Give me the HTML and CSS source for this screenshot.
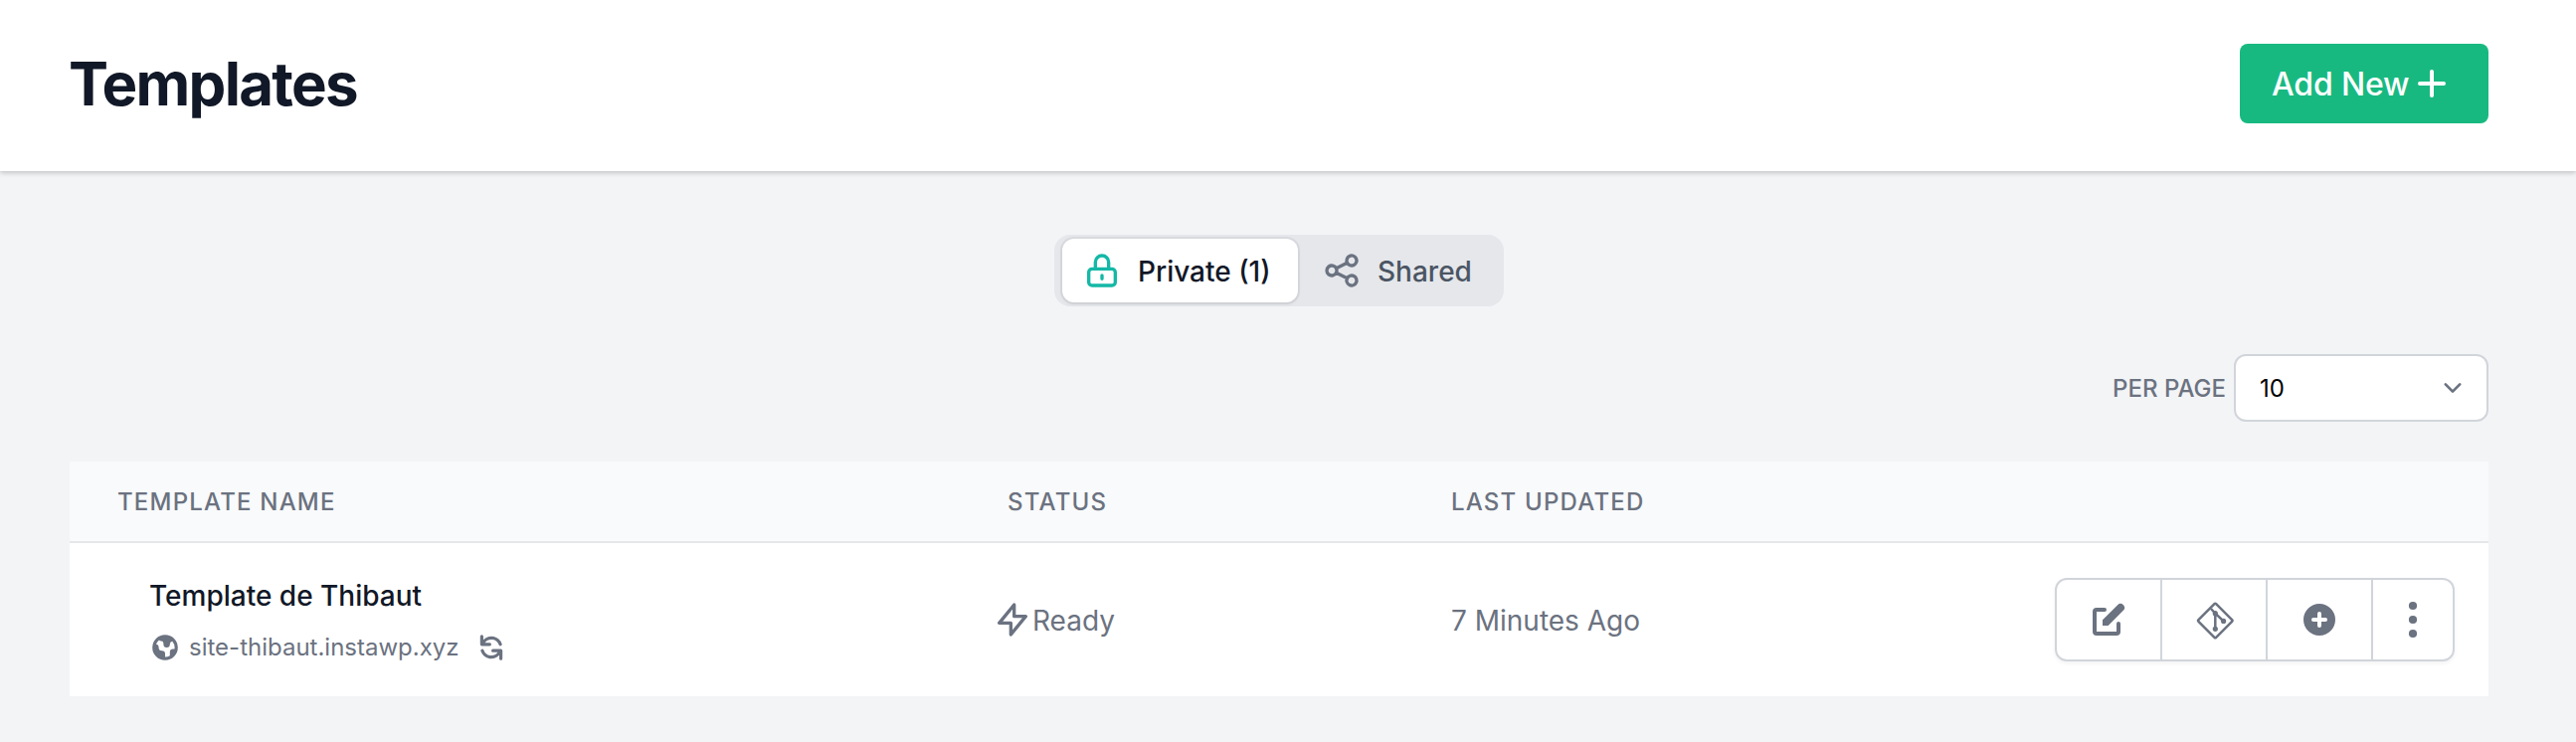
FILE: index.html
```html
<!DOCTYPE html>
<html lang="en">
<head>
<meta charset="utf-8">
<title>Templates</title>
<link rel="stylesheet" href="styles.css">
</head>
<body>
<header class="page-header">
  <h1 class="page-title">Templates</h1>
  <button class="add-button"><span class="label">Add New</span>
    <svg class="icon" viewBox="0 0 20 20" fill="currentColor"><path d="M10 3a1 1 0 011 1v5h5a1 1 0 110 2h-5v5a1 1 0 11-2 0v-5H4a1 1 0 110-2h5V4a1 1 0 011-1z"/></svg>
  </button>
</header>
<main class="content">
  <nav class="tabs">
    <a class="tab tab-active">
      <svg class="icon outline" viewBox="0 0 24 24"><path d="M12 15v2m-6 4h12a2 2 0 002-2v-6a2 2 0 00-2-2H6a2 2 0 00-2 2v6a2 2 0 002 2zm10-10V7a4 4 0 00-8 0v4h8z"/></svg>
      <span class="label">Private (1)</span>
    </a>
    <a class="tab tab-shared">
      <svg class="icon outline" viewBox="0 0 24 24"><path d="M8.684 13.342C8.886 12.938 9 12.482 9 12c0-.482-.114-.938-.316-1.342m0 2.684a3 3 0 110-2.684m0 2.684l6.632 3.316m-6.632-6l6.632-3.316m0 0a3 3 0 105.367-2.684 3 3 0 00-5.367 2.684zm0 9.316a3 3 0 105.368 2.684 3 3 0 00-5.368-2.684z"/></svg>
      <span class="label">Shared</span>
    </a>
  </nav>
  <div class="pager">
    <span class="pager-label label">PER PAGE</span>
    <div class="select">
      <span class="label">10</span>
      <svg class="chevron" viewBox="0 0 20 20"><path d="M6 8l4 4 4-4"/></svg>
    </div>
  </div>
  <section class="table">
    <div class="row head">
      <div class="head-name">TEMPLATE NAME</div>
      <div>STATUS</div>
      <div>LAST UPDATED</div>
    </div>
    <div class="row body-row">
      <div class="name-cell">
        <div class="name">Template de Thibaut</div>
        <div class="site">
          <svg class="icon-sm" viewBox="0 0 20 20" fill="currentColor"><path fill-rule="evenodd" d="M10 18a8 8 0 100-16 8 8 0 000 16zM4.332 8.027a6.012 6.012 0 011.912-2.706C6.512 5.73 6.974 6 7.5 6A1.5 1.5 0 019 7.5V8a2 2 0 004 0 2 2 0 011.523-1.943A5.977 5.977 0 0116 10c0 .34-.028.675-.083 1H15a2 2 0 00-2 2v2.197A5.973 5.973 0 0110 16v-2a2 2 0 00-2-2 2 2 0 01-2-2 2 2 0 00-1.668-1.973z"/></svg>
          <span class="site-url">site-thibaut.instawp.xyz</span>
          <svg class="icon-sm" viewBox="0 0 20 20" fill="currentColor"><path d="M4 2a1 1 0 011 1v2.101a7.002 7.002 0 0111.601 2.566 1 1 0 11-1.885.666A5.002 5.002 0 005.999 7H9a1 1 0 010 2H4a1 1 0 01-1-1V3a1 1 0 011-1zm.008 9.057a1 1 0 011.276.61A5.002 5.002 0 0014.001 13H11a1 1 0 110-2h5a1 1 0 011 1v5a1 1 0 11-2 0v-2.101a7.002 7.002 0 01-11.601-2.566 1 1 0 01.61-1.276z"/></svg>
        </div>
      </div>
      <div class="status">
        <svg class="icon outline" viewBox="0 0 24 24"><path d="M13 10V3L4 14h7v7l9-11h-7z"/></svg>
        <span class="label">Ready</span>
      </div>
      <div class="updated label">7 Minutes Ago</div>
      <div class="actions">
        <button class="action"><svg class="icon" viewBox="0 0 20 20" fill="currentColor"><path d="M17.414 2.586a2 2 0 00-2.828 0L7 10.172V13h2.828l7.586-7.586a2 2 0 000-2.828z"/><path d="M2 6a2 2 0 012-2h4a1 1 0 010 2H4v10h10v-4a1 1 0 112 0v4a2 2 0 01-2 2H4a2 2 0 01-2-2V6z"/></svg></button>
        <button class="action"><svg class="icon git" viewBox="0 0 40 40"><rect x="8.8" y="8.500" width="25" height="25" rx="1.200" transform="rotate(45 21.300 21)"/><path d="M17 9l4.300 4.700v15.500M21.300 13.700l8.300 7.800"/><circle cx="21.300" cy="13.700" r="2"/><circle cx="21.300" cy="29.300" r="2"/><circle cx="29.600" cy="21.400" r="2"/></svg></button>
        <button class="action"><svg class="icon" viewBox="0 0 20 20" fill="currentColor"><path fill-rule="evenodd" d="M10 18a8 8 0 100-16 8 8 0 000 16zm1-11a1 1 0 10-2 0v2H7a1 1 0 100 2h2v2a1 1 0 102 0v-2h2a1 1 0 100-2h-2V7z"/></svg></button>
        <button class="action action-menu"><svg class="icon" viewBox="0 0 40 40" fill="currentColor"><circle cx="20" cy="6" r="4.100"/><circle cx="20" cy="20" r="4.100"/><circle cx="20" cy="34" r="4.100"/></svg></button>
      </div>
    </div>
  </section>
</main>
</body>
</html>
```
FILE: styles.css
```css
* { box-sizing: border-box; }
body {
  margin: 0;
  background: #f3f4f6;
  color: #6b7280;
  font-family: Inter, sans-serif;
  font-size: 28px;
  line-height: 40px;
}
button { font: inherit; margin: 0; border: 0; background: none; color: inherit; }
svg { display: block; flex: none; }
.icon { width: 40px; height: 40px; }
.icon-sm { width: 32px; height: 32px; }
.outline { fill: none; stroke: currentColor; stroke-width: 2; stroke-linecap: round; stroke-linejoin: round; }
.label { padding-top: 2px; }

.page-header {
  display: flex;
  align-items: center;
  justify-content: space-between;
  height: 172px;
  padding: 0 88px 4px 69px;
  background: #fff;
  box-shadow: 0 2px 6px rgba(0, 0, 0, .1), 0 2px 4px rgba(0, 0, 0, .1);
}
.page-title {
  margin: 0;
  color: #111827;
  font-size: 60px;
  line-height: 72px;
  font-weight: 700;
  letter-spacing: -1.75px;
}
.add-button {
  display: flex;
  align-items: center;
  gap: 3px;
  width: 250px;
  height: 80px;
  padding: 0 0 0 32px;
  border-radius: 8px;
  background: #18b981;
  color: #fff;
  font-size: 32px;
  font-weight: 500;
  letter-spacing: -.15px;
  white-space: nowrap;
}

.content { padding: 64px 88px 46px 70px; }
.tabs {
  display: flex;
  align-items: center;
  width: 452px;
  height: 72px;
  margin-left: 990px;
  padding-left: 8px;
  border-radius: 16px;
  background: #e5e7eb;
  font-weight: 500;
}
.tab { display: flex; align-items: center; height: 64px; }
.tab-active {
  width: 237px;
  padding-left: 20px;
  gap: 16px;
  border-radius: 12px;
  background: #fff;
  color: #111827;
  box-shadow: 0 0 0 2px rgba(17, 24, 39, .06), 0 2px 4px rgba(0, 0, 0, .06);
}
.tab-active svg { color: #14b8a6; }
.tab-shared { padding-left: 24px; gap: 16px; color: #4b5563; }
.tab-shared svg { color: #6b7280; }

.pager {
  display: flex;
  justify-content: flex-end;
  align-items: center;
  gap: 8px;
  margin-top: 48px;
  font-size: 24px;
}
.pager-label { font-weight: 500; }
.select {
  display: flex;
  align-items: center;
  justify-content: space-between;
  width: 256px;
  height: 68px;
  padding: 0 16px 0 24px;
  border: 2px solid #d1d5db;
  border-radius: 12px;
  background: #fff;
  color: #000;
}
.chevron { width: 36px; height: 36px; fill: none; stroke: #6b7280; stroke-width: 1.5; stroke-linecap: round; stroke-linejoin: round; }

.table { margin-top: 40px; background: #fff; }
.row { display: grid; grid-template-columns: 943px 446px 607px 402px; align-items: center; }
.head {
  height: 82px;
  padding-top: 2px;
  border-bottom: 2px solid #e5e7eb;
  background: #f9fafb;
  font-size: 24px;
  font-weight: 500;
  letter-spacing: 1.2px;
}
.head-name { padding-left: 48px; }
.body-row { height: 154px; }
.name-cell { padding: 4px 0 0 80px; }
.name { color: #111827; font-weight: 500; }
.site { display: flex; align-items: center; margin-top: 12px; font-size: 24px; }
.site-url { margin: 0 16px 0 8px; }
.status { display: flex; align-items: center; margin-left: -15px; }
.actions {
  display: flex;
  height: 84px;
  border: 2px solid #d1d5db;
  border-radius: 12px;
  box-shadow: 0 2px 4px rgba(0, 0, 0, .05);
}
.action {
  display: flex;
  align-items: center;
  justify-content: center;
  width: 106px;
  padding: 0;
  border-right: 2px solid #d1d5db;
}
.action-menu { width: 80px; border: 0; }
.git { fill: none; stroke: currentColor; stroke-width: 2.5; }
.git circle { fill: currentColor; stroke-width: 1.2; }
```
